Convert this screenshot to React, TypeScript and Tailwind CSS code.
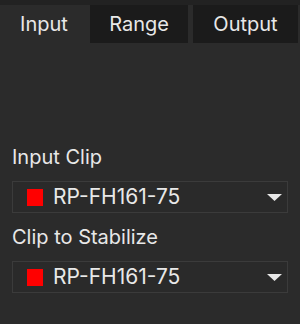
export default function App() {
  const tabs = [
    { label: 'Input', w: 'w-[88px]', active: true },
    { label: 'Range', w: 'w-[98px] ml-[2px]', active: false },
    { label: 'Output', w: 'w-[105px] ml-[5px]', active: false },
  ];

  const ClipSelect = () => (
    <div className="flex h-[32px] items-center border border-[#3b3b3b] bg-[#2a2a2a] pl-[14px] pr-[5px]">
      <span className="h-[17px] w-[16px] bg-[#ff0000]" />
      <span className="ml-[10px] flex-1 text-[21px] leading-[24px] text-[#e8e8e8]">RP-FH161-75</span>
      <svg width="15" height="7" viewBox="0 0 15 7">
        <polygon points="0,0 15,0 7.5,7" fill="#e8e8e8" />
      </svg>
    </div>
  );

  return (
    <div className="h-[324px] w-[300px] bg-[#2b2b2b] font-['Inter',sans-serif] text-[#e8e8e8]">
      <div className="h-[5px] bg-[#222222]" />
      {/* tabs */}
      <div className="flex h-[38px]">
        {tabs.map((t) => (
          <div
            key={t.label}
            className={`${t.w} pt-[7px] text-center text-[20px] leading-[24px] ${
              t.active ? 'bg-[#2b2b2b]' : 'bg-[#1b1b1b]'
            }`}
          >
            {t.label}
          </div>
        ))}
      </div>

      <div className="px-[12px] pt-[102px]">
        <div className="text-[20px] leading-[24px]">Input Clip</div>
        <div className="mt-[12px]">
          <ClipSelect />
        </div>
        <div className="mt-[12px] text-[20px] leading-[24px]">Clip to Stabilize</div>
        <div className="mt-[12px]">
          <ClipSelect />
        </div>
      </div>
    </div>
  );
}
